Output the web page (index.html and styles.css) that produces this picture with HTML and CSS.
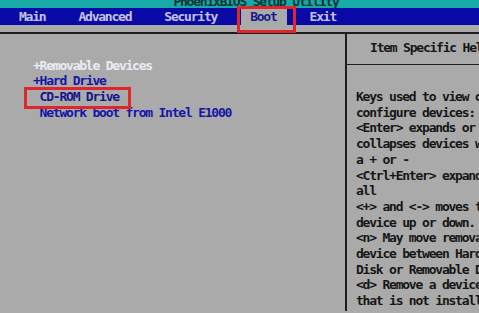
FILE: index.html
```html
<!DOCTYPE html>
<html lang="en">
<head>
    <meta charset="UTF-8">
    <title>PhoenixBIOS Setup Utility</title>
    <link rel="stylesheet" href="styles.css">
</head>
<body>
<div class="bios">
    <div class="title"><span>PhoenixBIOS Setup Utility</span></div>
    <nav class="menu">
        <span class="tab">Main</span>
        <span class="tab">Advanced</span>
        <span class="tab">Security</span>
        <span class="tab active mark">Boot</span>
        <span class="tab">Exit</span>
    </nav>
    <div class="gap"></div>
    <div class="main">
        <div class="list">
            <div class="row open">+Removable Devices</div>
            <div class="row">+Hard Drive</div>
            <div class="row sub cur"><span class="mark">CD-ROM Drive</span></div>
            <div class="row sub">Network boot from Intel E1000</div>
        </div>
        <aside class="help">
            <div class="help-head">Item Specific Help</div>
            <div class="help-body">
                <p>Keys used to view or</p>
                <p>configure devices:</p>
                <p>&lt;Enter&gt; expands or</p>
                <p>collapses devices with</p>
                <p>a + or -</p>
                <p>&lt;Ctrl+Enter&gt; expands</p>
                <p>all</p>
                <p>&lt;+&gt; and &lt;-&gt; moves the</p>
                <p>device up or down.</p>
                <p>&lt;n&gt; May move removable</p>
                <p>device between Hard</p>
                <p>Disk or Removable Disk</p>
                <p>&lt;d&gt; Remove a device</p>
                <p>that is not installed.</p>
            </div>
        </aside>
    </div>
</div>
</body>
</html>
```

FILE: styles.css
```css
*{margin: 0;padding: 0;box-sizing: border-box;}
html,body{overflow: hidden;background: #aaaaaa;}
body{
    font-family: "DejaVu Sans Mono", "Liberation Mono", monospace;
    font-size: 13px;
    font-weight: bold;
    letter-spacing: -1.22px;
    line-height: 15.7px;
}
.bios{width: 512px;height: 313px;background: #aaaaaa;}
.title{
    height: 8px;
    overflow: hidden;
    background: #17aaa6;
    text-align: center;
    color: #0e3434;
}
.title span{display: block;margin-top: -6px;}
.menu{
    height: 17px;
    background: #0a0aa6;
    display: flex;
    gap: 14px;
    padding-left: 10px;
    color: #c4c4ea;
}
.tab{
    padding: 1px 10px 0 9px;
    line-height: 16px;
}
.tab.active{
    background: #aaaaaa;
    color: #1a1a8e;
}
.gap{height: 7px;}
.main{
    display: grid;
    grid-template-columns: 345px 167px;
    border-top: 2px solid #1e1e1e;
    height: 279px;
}
.list{
    padding: 23.5px 0 0 33px;
    color: #1616a6;
}
.row{white-space: pre;}
.row.open{color: #ececf4;}
.row.sub{padding-left: 6.6px;}
.row.cur{color: #16168a;}
.mark{position: relative;}
.row .mark::after{
    content: "";
    position: absolute;
    left: -16px;
    right: -12px;
    top: -2px;
    bottom: -5px;
    border: 3px solid #e0262a;
}
.tab.mark::after{
    content: "";
    position: absolute;
    left: -4px;
    right: -9px;
    top: -2px;
    bottom: -8px;
    border: 3px solid #e0262a;
}
.help{
    border-left: 2px solid #1e1e1e;
    color: #161616;
}
.help-head{
    text-align: center;
    padding: 6px 0 0;
    height: 31px;
    border-bottom: 1px solid #1e1e1e;
}
.help-body{
    padding: 24px 0 0 9px;
}
.help-body p{white-space: pre;}
```
